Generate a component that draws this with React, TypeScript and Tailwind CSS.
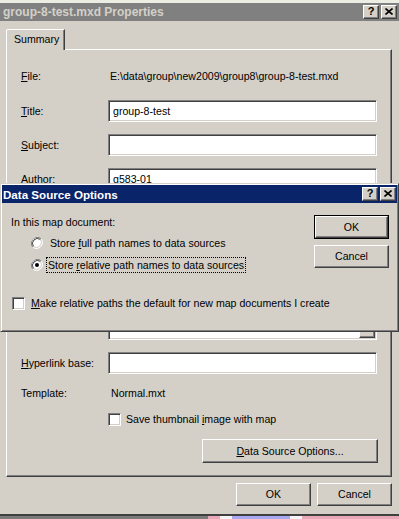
import React from "react";

const raised =
  "bg-[#d4d0c8] border border-t-white border-l-white border-b-[#404040] border-r-[#404040] shadow-[inset_-1px_-1px_0_#808080]";
const sunken =
  "bg-white border border-t-[#808080] border-l-[#808080] border-b-white border-r-white shadow-[inset_1px_1px_0_#404040,inset_-1px_-1px_0_#d4d0c8]";

function CapBtn({ kind }: { kind: "help" | "close" }) {
  return (
    <div className={`w-[16px] h-[14px] flex items-center justify-center ${raised}`}>
      {kind === "help" ? (
        <span className="font-bold text-[11px] leading-[11px] text-black -mt-[1px]">?</span>
      ) : (
        <svg width="8" height="7" viewBox="0 0 8 7" className="-mt-[1px]">
          <path d="M0.5 0.5 L7.5 6.5 M7.5 0.5 L0.5 6.5" stroke="#000" strokeWidth="1.6" fill="none" />
        </svg>
      )}
    </div>
  );
}

function Field({ label, h = 22, children }: { label?: React.ReactNode; h?: number; children?: React.ReactNode }) {
  return (
    <div className="flex items-start">
      <div className="w-[87px] h-[22px] flex items-center">{label}</div>
      <div className={`w-[269px] ${h === 22 ? "h-[22px]" : "h-[70px]"} ${sunken} relative flex items-center pl-[4px]`}>
        {children}
      </div>
    </div>
  );
}

function Radio({ checked }: { checked?: boolean }) {
  return (
    <svg width="12" height="12" viewBox="0 0 12 12" className="shrink-0">
      <path d="M10.2 1.8 A6 6 0 0 0 1.8 10.2" stroke="#808080" strokeWidth="1" fill="none" />
      <path d="M1.8 10.2 A6 6 0 0 0 10.2 1.8" stroke="#ffffff" strokeWidth="1" fill="none" />
      <circle cx="6" cy="6" r="5" fill="#fff" />
      <path d="M9.5 2.5 A5 5 0 0 0 2.5 9.5" stroke="#404040" strokeWidth="1" fill="none" />
      <path d="M2.5 9.5 A5 5 0 0 0 9.5 2.5" stroke="#d4d0c8" strokeWidth="1" fill="none" />
      {checked && <circle cx="6" cy="6" r="2" fill="#000" />}
    </svg>
  );
}

function Check() {
  return <div className={`w-[13px] h-[13px] shrink-0 ${sunken}`} />;
}

export default function App() {
  return (
    <div className="w-[399px] h-[519px] relative overflow-hidden bg-[#d4d0c8] text-[10.6px] leading-[13px] text-black font-['Liberation_Sans',Arial,sans-serif]">
      {/* main window */}
      <div className="h-[516px] flex flex-col border-b-2 border-b-[#404040]">
        <div className="h-[3px] bg-[#eceee4]" />
        <div className="h-[18px] flex items-center bg-[#808080] pl-[3px] pr-[2px]">
          <span className="font-bold text-[12px] text-[#d4d0c8]">group-8-test.mxd Properties</span>
          <div className="ml-auto flex gap-[2px]">
            <CapBtn kind="help" />
            <CapBtn kind="close" />
          </div>
        </div>

        <div className="pl-[6px] pr-[7px] pt-[8px]">
          {/* tab */}
          <div className="relative z-10 w-[59px] h-[21px] -mb-[1px] bg-[#d4d0c8] border-l border-t border-r border-l-white border-t-white border-r-[#404040] shadow-[inset_-1px_0_0_#808080] rounded-tl-[2px] flex items-center pl-[7px] pb-[1px]">
            Summary
          </div>
          {/* panel */}
          <div className="h-[428px] border border-t-white border-l-white border-b-[#404040] border-r-[#404040] shadow-[inset_-1px_-1px_0_#808080] pl-[14px] pr-[13px] flex flex-col">
            <div className="flex items-center h-[18px] mt-[17px] mb-[15px]">
              <div className="w-[89px]">
                <span className="underline">F</span>ile:
              </div>
              <span>{"E:\\data\\group\\new2009\\group8\\group-8-test.mxd"}</span>
            </div>
            <div className="flex flex-col gap-[12px]">
              <Field label={<span><span className="underline">T</span>itle:</span>}>group-8-test</Field>
              <Field label={<span><span className="underline">S</span>ubject:</span>} />
              <Field label={<span><span className="underline">A</span>uthor:</span>}>g583-01</Field>
              <Field label={<span>C<span className="underline">a</span>tegory:</span>} />
              <Field label={<span><span className="underline">K</span>eywords:</span>} />
              <Field label={<span>C<span className="underline">o</span>mments:</span>} h={70}>
                <div className="absolute right-[1px] top-[1px] bottom-[1px] w-[16px] bg-[#e4e2dc] flex flex-col justify-between">
                  <div className={`w-[16px] h-[16px] ${raised}`} />
                  <div className={`w-[16px] h-[16px] ${raised}`} />
                </div>
              </Field>
              <Field label={<span><span className="underline">H</span>yperlink base:</span>} />
            </div>
            <div className="flex items-center h-[18px] mt-[10px]">
              <div className="w-[90px]">Template:</div>
              <span>Normal.mxt</span>
            </div>
            <div className="flex items-center h-[18px] mt-[8px] pl-[87px] gap-[5px]">
              <Check />
              <span>
                Save thumbnail <span className="underline">i</span>mage with map
              </span>
            </div>
            <div className="flex justify-end mt-[11px]">
              <div className={`w-[176px] h-[24px] flex items-center justify-center ${raised}`}>
                <span>
                  <span className="underline">D</span>ata Source Options...
                </span>
              </div>
            </div>
          </div>
          {/* footer buttons */}
          <div className="flex justify-end gap-[6px] mt-[6px]">
            <div className={`w-[75px] h-[23px] flex items-center justify-center ${raised}`}>OK</div>
            <div className={`w-[75px] h-[23px] flex items-center justify-center ${raised}`}>Cancel</div>
          </div>
        </div>
      </div>

      {/* desktop strip */}
      <div className="h-[3px] flex">
        <div className="w-[208px] bg-[#7a7a7a]" />
        <div className="w-[12px] bg-[#e8a8b8]" />
        <div className="w-[12px] bg-[#f4f4f4]" />
        <div className="w-[58px] bg-[#a8a8f0]" />
        <div className="w-[12px] bg-[#f4f4f4]" />
        <div className="flex-1 bg-[#e8a8b8]" />
      </div>

      {/* Data Source Options dialog */}
      <div className="absolute left-0 top-[183px] w-[399px] h-[149px] bg-[#d4d0c8] border border-t-[#d4d0c8] border-l-[#d4d0c8] border-b-[#404040] border-r-[#404040] shadow-[inset_1px_1px_0_#fff,inset_-1px_-1px_0_#808080] p-[1px] flex flex-col">
        <div className="h-[18px] flex items-center bg-[#0a246a] pl-[1px] pr-[1px]">
          <span className="font-bold text-[11.6px] text-white">Data Source Options</span>
          <div className="ml-auto flex gap-[2px]">
            <CapBtn kind="help" />
            <CapBtn kind="close" />
          </div>
        </div>
        <div className="flex pl-[9px] pr-[8px] pt-[12px]">
          <div className="flex-1 min-w-0 flex flex-col">
            <div className="h-[14px] flex items-center">In this map document:</div>
            <div className="h-[16px] mt-[6px] flex items-center pl-[20px] gap-[5px]">
              <Radio />
              <span className="px-[2px] whitespace-nowrap">
                Store <span className="underline">f</span>ull path names to data sources
              </span>
            </div>
            <div className="h-[16px] mt-[6px] flex items-center pl-[20px] gap-[3px]">
              <Radio checked />
              <span className="h-[16px] leading-[14px] px-[1px] border border-dotted border-black whitespace-nowrap">
                Store <span className="underline">r</span>elative path names to data sources
              </span>
            </div>
            <div className="h-[16px] mt-[22px] flex items-center pl-[1px] gap-[6px]">
              <Check />
              <span className="whitespace-nowrap">
                <span className="underline">M</span>ake relative paths the default for new map documents I create
              </span>
            </div>
          </div>
          <div className="w-[75px] shrink-0 flex flex-col gap-[6px]">
            <div className="h-[24px] border border-black">
              <div className={`h-full flex items-center justify-center ${raised}`}>OK</div>
            </div>
            <div className={`h-[23px] flex items-center justify-center ${raised}`}>Cancel</div>
          </div>
        </div>
      </div>
    </div>
  );
}
